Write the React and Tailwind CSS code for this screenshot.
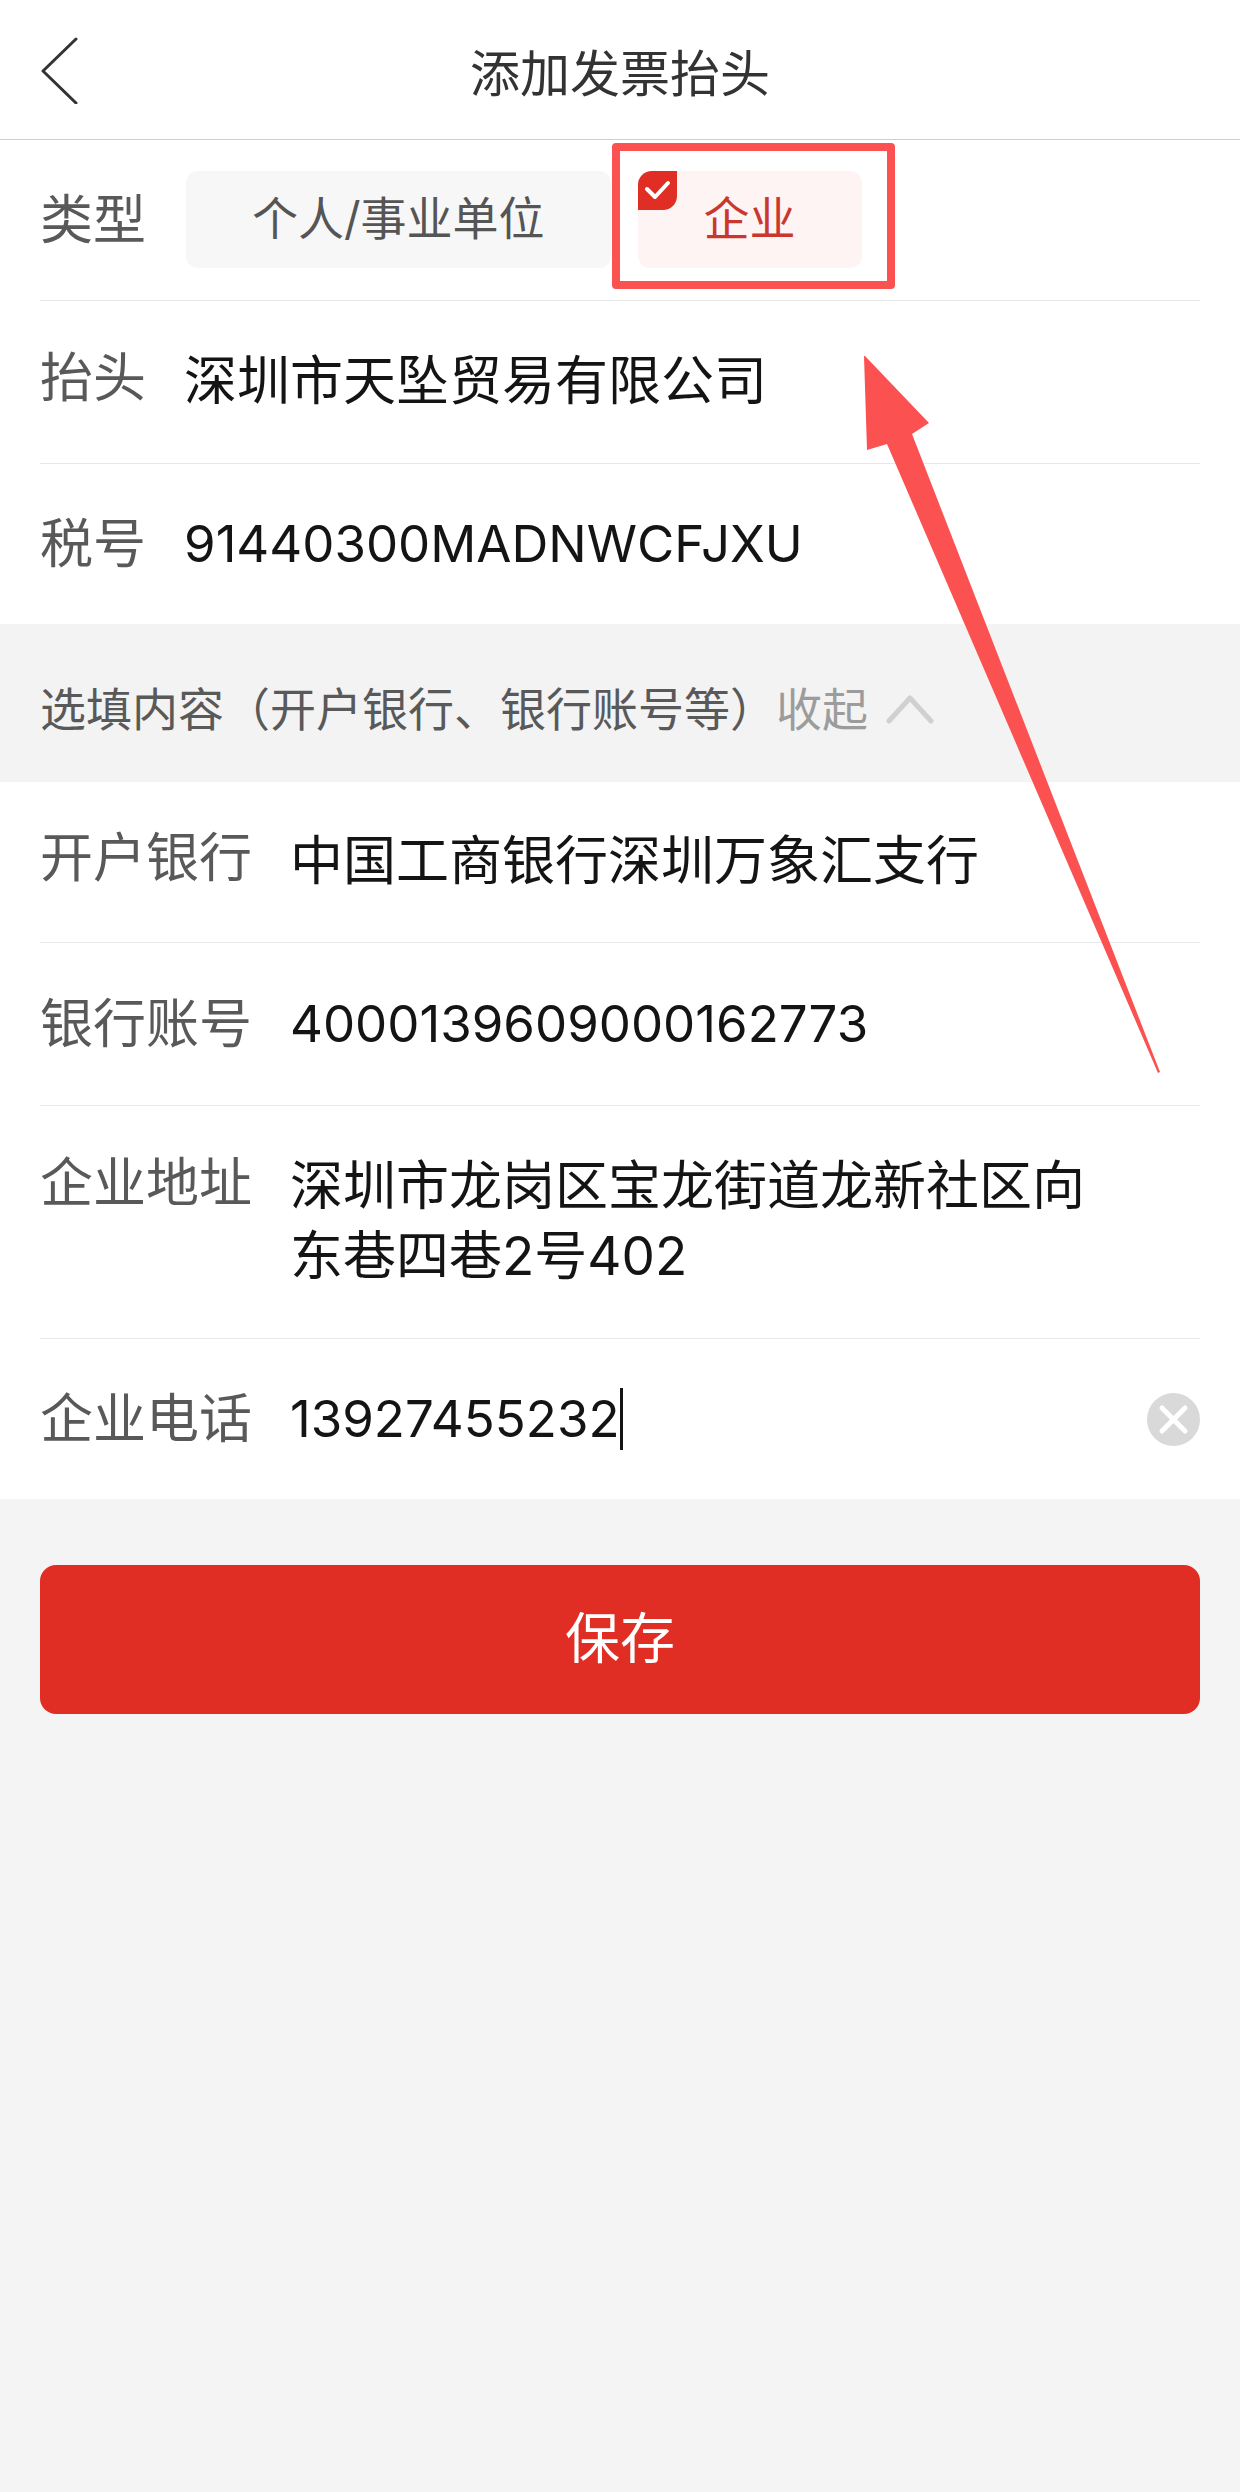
import React, { useState } from 'react';

const textStyle = "min-w-0 mt-[3px] bg-transparent p-0 text-[53px] leading-[70px] text-[#141414] outline-none";
const numberStyle = "min-w-0 bg-transparent p-0 text-[51px] leading-[70px] text-[#141414] outline-none";

// One line of the form: grey label on the left, editable value beside it
const Row = ({ id, label, className, last = false, children }) => (
  <div className={`flex items-start gap-[38px] ${className} ${last ? '' : 'border-b border-[#e8e8e8]'}`}>
    <label htmlFor={id} className="shrink-0 text-[53px] leading-[70px] text-[#595959]">
      {label}
    </label>
    {children}
  </div>
);

const TypeOption = ({ value, label, checked, onChange, children }) => (
  <label
    className={`relative flex h-[97px] items-center rounded-xl px-[66px] pb-1 text-[46px] leading-[60px] cursor-pointer ${
      checked ? 'bg-[#fdf4f3] text-[#c9372e]' : 'bg-[#f7f7f7] text-[#555555]'
    }`}
  >
    <input
      type="radio"
      name="type"
      value={value}
      checked={checked}
      onChange={() => onChange(value)}
      className="sr-only"
    />
    {label}
    {checked && (
      <span className="absolute left-0 top-0 h-[39px] w-[39px] rounded-tl-[14px] rounded-br-[14px] bg-[#e02e24]">
        <svg viewBox="0 0 39 39" className="h-full w-full" fill="none" stroke="#fff" strokeWidth="4" strokeLinecap="round" strokeLinejoin="round">
          <path d="M9 18l8 8 13-14" />
        </svg>
      </span>
    )}
    {children}
  </label>
);

// Red frame and arrow that point the reader at the company option
const Highlight = () => (
  <>
    <span className="pointer-events-none absolute -bottom-[21px] -left-[26px] -right-[33px] -top-7 z-10 rounded-[4px] border-8 border-[#fb5151]" />
    <svg
      className="pointer-events-none absolute left-[226px] top-[185px] z-10 h-[717px] w-[297px]"
      viewBox="0 0 297 717"
      fill="#fb5151"
    >
      <path d="M0 0H1L65 67L48 78L296 716L294 717L23 88L3 94Z" />
    </svg>
  </>
);

const App = () => {
  const [type, setType] = useState('company');
  const [open, setOpen] = useState(true);
  const [form, setForm] = useState({
    title: '深圳市天坠贸易有限公司',
    taxNo: '91440300MADNWCFJXU',
    bank: '中国工商银行深圳万象汇支行',
    account: '4000139609000162773',
    address: '深圳市龙岗区宝龙街道龙新社区向东巷四巷2号402',
    phone: '13927455232',
  });

  const field = (name) => ({
    id: name,
    value: form[name],
    onChange: (e) => setForm({ ...form, [name]: e.target.value }),
  });

  return (
    <div className="min-h-screen bg-[#f4f4f4] font-['Inter','Noto_Sans_CJK_SC',sans-serif]">
      <header className="grid h-[140px] grid-cols-[1fr_auto_1fr] items-center border-b border-[#cfcfcf] bg-white px-10">
        <button type="button" aria-label="返回" className="justify-self-start">
          <svg width="40" height="68" viewBox="0 0 40 68" fill="none" stroke="#333" strokeWidth="3" strokeLinecap="round" strokeLinejoin="round">
            <path d="M36 3L3 35l33 32" />
          </svg>
        </button>
        <h1 className="pt-2 text-[50px] leading-[70px] text-[#333333]">添加发票抬头</h1>
      </header>

      <form onSubmit={(e) => e.preventDefault()}>
        <section className="bg-white px-10">
          <div role="radiogroup" aria-labelledby="type-label" className="flex items-center border-b border-[#e8e8e8] pt-[31px] pb-8">
            <span id="type-label" className="mr-10 text-[53px] leading-[70px] text-[#595959]">类型</span>
            <div className="flex gap-[27px]">
              <TypeOption value="personal" label="个人/事业单位" checked={type === 'personal'} onChange={setType} />
              <TypeOption value="company" label="企业" checked={type === 'company'} onChange={setType}>
                <Highlight />
              </TypeOption>
            </div>
          </div>
          <Row id="title" label="抬头" className="pt-[42px] pb-[47px]">
            <input type="text" {...field('title')} className={`flex-1 ${textStyle}`} />
          </Row>
          <Row id="taxNo" label="税号" className="py-[45px]" last>
            <input type="text" {...field('taxNo')} className={`flex-1 ${numberStyle}`} />
          </Row>
        </section>

        <div className="flex h-[158px] items-center bg-[#f3f3f3] px-10 pt-3 text-[46px] leading-[60px] text-[#595959]">
          <span>选填内容（开户银行、银行账号等）</span>
          <button type="button" onClick={() => setOpen(!open)} className="flex items-center gap-[18px] text-[#9c9c9c]">
            收起
            <svg width="48" height="30" viewBox="0 0 48 30" fill="none" stroke="#d0d0d0" strokeWidth="5" strokeLinecap="round" strokeLinejoin="round">
              <path d="M3 27L24 4l21 23" />
            </svg>
          </button>
        </div>

        {open && (
          <section className="bg-white px-10">
            <Row id="bank" label="开户银行" className="pt-[41px] pb-[46px]">
              <input type="text" {...field('bank')} className={`flex-1 ${textStyle}`} />
            </Row>
            <Row id="account" label="银行账号" className="py-[46px]">
              <input type="text" inputMode="numeric" {...field('account')} className={`flex-1 ${numberStyle}`} />
            </Row>
            <Row id="address" label="企业地址" className="pt-[42px] pb-[47px]">
              <textarea rows={2} {...field('address')} className={`mr-20 flex-1 resize-none overflow-hidden ${textStyle}`} />
            </Row>
            <Row id="phone" label="企业电话" className="py-[45px]" last>
              <div className="flex h-[70px] flex-1 items-center">
                <input type="tel" {...field('phone')} className={`field-sizing-content caret-transparent ${numberStyle}`} />
                <span className="h-[62px] w-[3px] bg-[#141414]" />
                <button type="button" aria-label="清除" onClick={() => setForm({ ...form, phone: '' })} className="ml-auto">
                  <svg width="53" height="53" viewBox="0 0 53 53" fill="none" stroke="#fff" strokeWidth="5" strokeLinecap="round">
                    <circle cx="26.5" cy="26.5" r="26.5" fill="#d9d9d9" stroke="none" />
                    <path d="M15 15l23 23M38 15L15 38" />
                  </svg>
                </button>
              </div>
            </Row>
          </section>
        )}

        <div className="px-10 pt-[66px]">
          <button type="submit" className="h-[149px] w-full rounded-2xl bg-[#e02e24] pb-1 text-[55px] leading-[70px] text-white">
            保存
          </button>
        </div>
      </form>
    </div>
  );
};

export default App;
